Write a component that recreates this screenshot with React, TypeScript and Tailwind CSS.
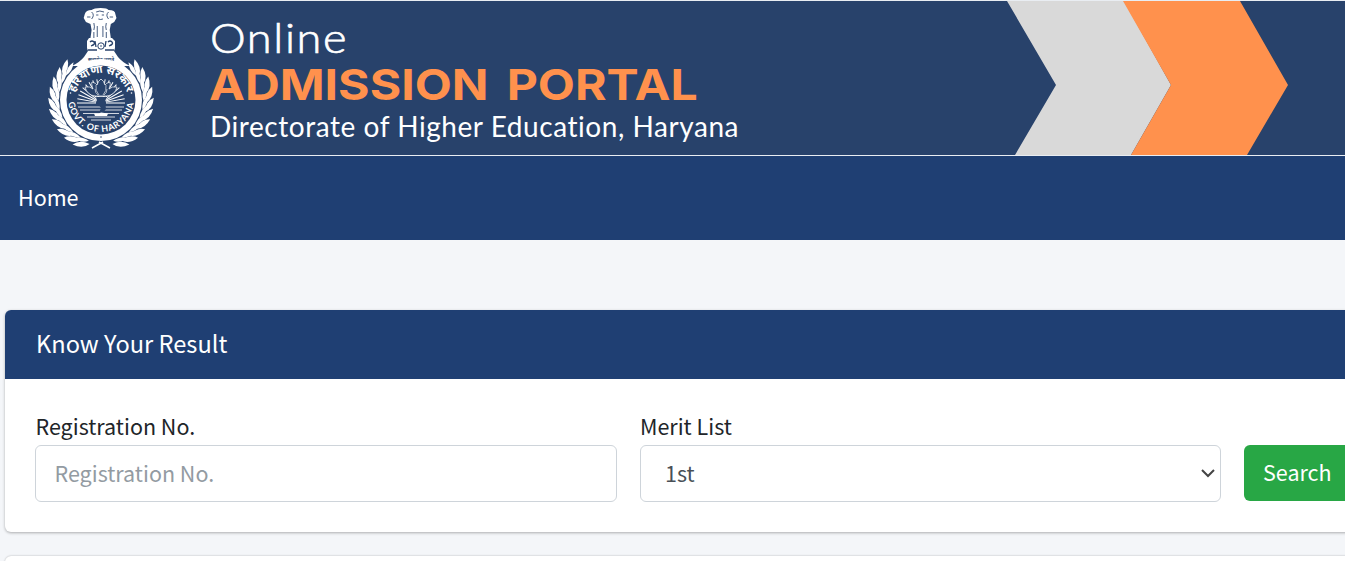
// degrees from the top of the ring, one leaf pair each
const leaves = [46, 58, 70, 82, 94, 106, 118, 130, 142, 154];
const rays = [-90, -80, -70, -60, -50, -40, -30, -20, -10, 0, 10, 20, 30, 40, 50, 60, 70, 80, 90];

function WreathHalf() {
  return (
    <g>
      {leaves.map((a) => (
        <g key={a} transform={`rotate(${-a} 55 94)`}>
          <path d="M46 49.5Q50 41.500 61 41.500 57 49.500 46 49.5Z" />
          <path d="M48 52Q54 46 63 48 57 53.500 48 52Z" />
        </g>
      ))}
    </g>
  );
}

function Emblem() {
  return (
    <svg
      viewBox="0 0 110 146"
      className="h-[146px] w-[110px] shrink-0"
      fill="#fff"
      aria-label="Government of Haryana emblem"
    >
      <defs>
        <path id="ringTop" d="M28 94a27 27 0 0 1 54 0" />
        <path id="ringBottom" d="M22.600 88a32.800 32.800 0 1 0 64.800 0" />
      </defs>
      {/* lion capital */}
      <g transform="translate(-7.500 0) scale(1.130 1)">
        <path d="M41 8q1-4 6-4 2-2 8-2t7 2q6 0 6 4l1 4-2 4-3 2-1 6 1 8H46l1-8-1-6-4-2-2-4Z" />
        <path
          d="M47 6q3 3 0 7m15-7q-3 3 0 7M51 6q3-2 7 0m-7 3h2m3 0h2m-5 4q2 1 4 0M43 11h3m17 0h3M49 17q1 4 0 7m11-7q-1 4 0 7M52 20v11m5-11v11M49 26v6m11-6v6"
          stroke="#28426b"
          strokeWidth="0.8"
          fill="none"
        />
      </g>
      <path d="M43 32h23l3 3v7l-1 3 4 6q4 5 12 9H26q8-4 12-9l4-6-1-3v-7Z" />
      <path
        d="M44 36q2-2 4 0t-3 4m4-5 1 6m10-6-1 6m3-5q2-2 4 0t-3 4M42 44h9m8 0h9"
        stroke="#28426b"
        strokeWidth="1.3"
        fill="none"
      />
      <circle cx="55" cy="40" r="3.2" fill="none" stroke="#28426b" strokeWidth="1" />
      <circle cx="55" cy="40" r="0.8" fill="#28426b" />
      <text x="55" y="55" fontSize="5" fontWeight="700" textAnchor="middle" fill="#28426b" fontFamily="Noto Sans, Noto Sans Devanagari, sans-serif">
        सत्यमेव जयते
      </text>
      <WreathHalf />
      <g transform="translate(110 0) scale(-1 1)">
        <WreathHalf />
      </g>
      <path d="m46 142 11-6m7 6-11-6" stroke="#fff" strokeWidth="1.5" />
      <circle cx="55" cy="94" r="41" />
      <circle cx="55" cy="94" r="34.5" fill="#28426b" />
      <circle cx="55" cy="131" r="0.8" fill="#28426b" />
      <text fontSize="11" fontWeight="700" fontFamily="Noto Sans, Noto Sans Devanagari, sans-serif">
        <textPath href="#ringTop" startOffset="50%" textAnchor="middle">
          हरियाणा सरकार
        </textPath>
      </text>
      <text fontSize="8.8" fontFamily="Lato, sans-serif" fontWeight="700" letterSpacing="0.7">
        <textPath href="#ringBottom" startOffset="50%" textAnchor="middle">
          GOVT. OF HARYANA
        </textPath>
      </text>
      <circle cx="24.500" cy="87" r="0.8" />
      <circle cx="85.500" cy="87" r="0.8" />
      {/* sun rays, water and lotus */}
      <g stroke="#fff" strokeWidth="1">
        {rays.map((a) => (
          <path key={a} d="M55 92V73" transform={`rotate(${a} 55 97)`} />
        ))}
      </g>
      <path d="M32 101h46M34 104h42M37 107.500h36M41 111h28M45 114h20" stroke="#fff" strokeWidth="0.8" />
      <path
        d="M39 81q5-1 8 2-2-6-1-7 4 1 5 3 1-4 4-6 3 2 4 6 1-2 5-3 1 2-1 7 3-3 8-2-2 8-10 9H49q-8-1-10-9Z"
        fill="#28426b"
        stroke="#fff"
        strokeWidth="0.7"
      />
      <path d="M50 79q-1 6 3 10m7-10q1 6-3 10m-8-6q0 4 3 6m9-6q0 4-3 6" stroke="#fff" strokeWidth="0.6" fill="none" />
      <path d="M50 91h11l-2 4 1 8-3 4h-4l2-5-3-4Z" fill="#28426b" />
      <path d="M48 107.500h5l2-1 7 1-1 2.500H49Z" />
    </svg>
  );
}

function Banner() {
  return (
    <header className="flex h-[156px] border-y border-[#e9edf2] bg-[#28426b] text-white">
      <div className="flex w-[210px] shrink-0 pl-[46px] pt-[5px]">
        <Emblem />
      </div>
      <div className="flex w-[797px] shrink-0 flex-col whitespace-nowrap pt-[13px]">
        <span className="h-[47px] w-fit origin-left scale-x-[1.1] font-['Lato'] text-[41px] font-light leading-[47px] tracking-[1.5px] [-webkit-text-stroke:0.7px_#fff]">
          Online
        </span>
        <span className="-ml-px h-[46px] w-fit origin-left scale-x-[1.12] font-['Inter'] text-[43px] font-bold leading-[46px] text-[#ff914d] [word-spacing:6px]">
          ADMISSION PORTAL
        </span>
        <span className="h-[38px] w-fit font-['Lato'] text-[28px] leading-[38px] tracking-[0.55px]">
          Directorate of Higher Education, Haryana
        </span>
      </div>
      <svg viewBox="0 0 338 154" className="h-[154px] w-[338px] shrink-0">
        <path d="M0 0h117l47 84-40 70H8l41-70Z" fill="#d9d9d9" />
        <path d="M116 0h117l48 84-41 70H124l40-70Z" fill="#ff914d" />
      </svg>
    </header>
  );
}

function SearchForm() {
  return (
    <section className="mx-[5px] w-[1400px] rounded-md bg-white shadow-[0_1px_3px_rgba(0,0,0,0.3)]">
      <h3 className="h-[69px] rounded-t-md bg-[#1f3f73] pl-[31px] text-[23.6px] leading-[67px] text-white">
        Know Your Result
      </h3>
      <form className="flex h-[153px] items-start pl-[30px] pt-[33px]">
        <label className="mr-[23px] w-[582px]">
          <span className="block h-[33px] pl-[0.5px] leading-[28px]">Registration No.</span>
          <input
            className="block h-[57px] w-full rounded-md border border-[#ced4da] px-[18.5px] pb-[3px] placeholder:text-[#939ba2]"
            placeholder="Registration No."
          />
        </label>
        <label className="mr-[23px] w-[581px]">
          <span className="block h-[33px] leading-[28px]">Merit List</span>
          <div className="flex h-[57px] items-center justify-between rounded-md border border-[#ced4da] pl-6 pr-[5px] text-[#495057]">
            <span>1st</span>
            <svg viewBox="0 0 14 9" className="h-[9px] w-[14px]" fill="none" stroke="#444" strokeWidth="2">
              <path d="m1 1 6 6 6-6" />
            </svg>
          </div>
        </label>
        <button type="button" className="mt-[33px] h-14 rounded-md bg-[#28a745] px-[19px] pb-px text-white">
          Search
        </button>
      </form>
    </section>
  );
}

function App() {
  return (
    <div className="h-[561px] w-full overflow-hidden bg-[#f4f6f9] font-['Noto_Sans_CJK_SC',sans-serif] text-[21.5px] text-[#212529]">
      <Banner />
      <nav className="flex h-[84px] items-center bg-[#1f3f73] pb-px pl-[18px] text-white">
        <a href="#">Home</a>
      </nav>
      <main className="flex flex-col gap-6 pt-[70px]">
        <SearchForm />
        <section className="mx-[5px] h-20 w-[1400px] rounded-md bg-white shadow-[0_0_2px_rgba(0,0,0,0.3)]" />
      </main>
    </div>
  );
}

export default App;
